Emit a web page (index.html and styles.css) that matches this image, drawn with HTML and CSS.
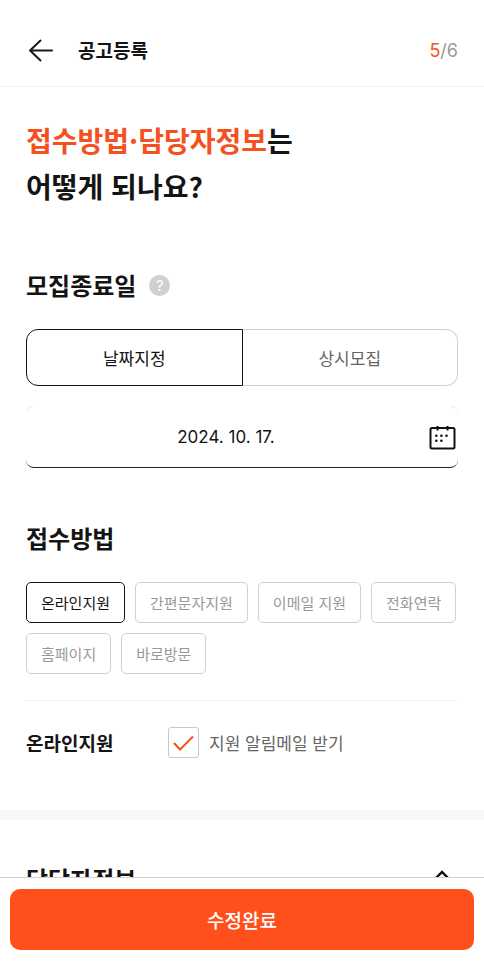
FILE: index.html
```html
<!DOCTYPE html>
<html lang="ko">
<head>
  <meta charset="UTF-8">
  <meta name="viewport" content="width=device-width, initial-scale=1.0">
  <title>공고등록</title>
  <link rel="stylesheet" href="styles.css">
</head>
<body>
  <div class="app">
    <header class="header">
      <button type="button" class="back-btn" aria-label="뒤로">
        <svg width="26" height="24" viewBox="0 0 26 24" fill="none" stroke="#1a1a1a" stroke-width="2" stroke-linecap="round" stroke-linejoin="round">
          <path d="M24 12.5H2M12.5 2.5L2 12.5L12.5 22.5"/>
        </svg>
      </button>
      <div class="header-title">공고등록</div>
      <div class="step"><span class="accent">5</span>/6</div>
    </header>

    <main class="content">
      <section class="section">
        <h1><span class="accent">접수방법·담당자정보</span>는<br>어떻게 되나요?</h1>

        <div class="title-row">
          <h2>모집종료일</h2>
          <button type="button" class="help-btn" aria-label="도움말">?</button>
        </div>
        <div class="tabs">
          <button type="button" class="tab active">날짜지정</button>
          <button type="button" class="tab">상시모집</button>
        </div>
        <div class="date-box">
          <input type="text" class="date-input" value="2024. 10. 17." aria-label="모집종료일">
          <button type="button" class="calendar-btn" aria-label="달력">
            <svg width="28" height="26" viewBox="0 0 28 26" fill="none" stroke="#111" stroke-width="2">
              <rect x="2.5" y="4" width="24" height="20.5" rx="1.5"/>
              <path d="M9.5 2V6.5M19.5 2V6.5"/>
              <g fill="#111" stroke="none">
                <circle cx="8.3" cy="11.7" r="1.3"/>
                <circle cx="13.4" cy="11.7" r="1.3"/>
                <circle cx="18.5" cy="11.7" r="1.3"/>
                <circle cx="8.3" cy="16.8" r="1.3"/>
                <circle cx="13.4" cy="16.8" r="1.3"/>
              </g>
            </svg>
          </button>
        </div>

        <div class="title-row method-title">
          <h2>접수방법</h2>
        </div>
        <div class="chips">
          <button type="button" class="chip active">온라인지원</button>
          <button type="button" class="chip">간편문자지원</button>
          <button type="button" class="chip">이메일 지원</button>
          <button type="button" class="chip">전화연락</button>
          <button type="button" class="chip">홈페이지</button>
          <button type="button" class="chip">바로방문</button>
        </div>

        <div class="option-row">
          <h3>온라인지원</h3>
          <input type="checkbox" class="check" id="mailAlarm" checked>
          <label for="mailAlarm">지원 알림메일 받기</label>
        </div>
      </section>

      <section class="section manager">
        <h2>담당자정보</h2>
        <button type="button" class="fold-btn" aria-label="접기">
          <svg width="20" height="20" viewBox="0 0 20 20" fill="none" stroke="#111" stroke-width="2.4">
            <path d="M1 12L10 3L19 12"/>
          </svg>
        </button>
      </section>
    </main>

    <footer class="footer">
      <button type="submit" class="submit-btn">수정완료</button>
    </footer>
  </div>
</body>
</html>
```
FILE: styles.css
```css
:root {
  --primary: #ff501b;
  --accent: #f4511e;
  --text: #141414;
  --gray: #666;
  --light: #999;
  --border: #d0d0d0;
  --line: #f0f0f0;
}

* {
  margin: 0;
  padding: 0;
  box-sizing: border-box;
}

body {
  background: #fff;
  color: var(--text);
  font-family: 'Noto Sans CJK KR', sans-serif;
}

button, input {
  font-family: inherit;
  color: inherit;
  background: none;
  border: none;
}

button {
  cursor: pointer;
}

svg {
  display: block;
}

h1 {
  font-size: 28px;
  line-height: 46px;
  font-weight: 700;
}

h2 {
  font-size: 24px;
  line-height: 36px;
  font-weight: 700;
}

h3 {
  font-size: 19px;
  font-weight: 700;
}

.accent {
  color: var(--accent);
}

.app {
  height: 100vh;
  display: flex;
  flex-direction: column;
}

.header {
  display: flex;
  align-items: center;
  padding: 30px 26px 16px 28px;
  border-bottom: 1px solid var(--line);
}

.back-btn {
  margin-right: 24px;
}

.header-title {
  flex: 1;
  font-size: 19px;
  line-height: 40px;
  font-weight: 700;
}

.step {
  font-family: Inter, sans-serif;
  font-size: 18px;
  color: var(--light);
}

.content {
  flex: 1;
  min-height: 0;
  overflow-y: auto;
  scrollbar-width: none;
}

.section {
  padding: 30px 26px 52px;
}

.title-row {
  display: flex;
  align-items: center;
  gap: 13px;
  margin-top: 58px;
}

.method-title {
  margin-top: 52px;
}

.help-btn {
  width: 21px;
  height: 21px;
  border-radius: 50%;
  background: #d0d0d0;
  color: #fff;
  font-family: Inter, sans-serif;
  font-size: 15px;
  line-height: 21px;
}

.tabs {
  display: flex;
  margin-top: 26px;
}

.tab {
  flex: 1;
  height: 57px;
  border: 1px solid var(--border);
  border-left: none;
  border-radius: 0 12px 12px 0;
  font-size: 17px;
  color: var(--gray);
}

.tab.active {
  border: 1px solid var(--text);
  border-radius: 12px 0 0 12px;
  color: var(--text);
}

.date-box {
  position: relative;
  display: flex;
  align-items: center;
  height: 62px;
  margin-top: 20px;
  border-bottom: 1px solid #222;
  border-radius: 8px;
}

/* faint rounded corners on the upper edge */
.date-box::before,
.date-box::after {
  content: '';
  position: absolute;
  top: 0;
  width: 7px;
  height: 7px;
  border-top: 1px solid #e4e4e4;
}

.date-box::before {
  left: 0;
  border-top-left-radius: 7px;
}

.date-box::after {
  right: 0;
  border-top-right-radius: 7px;
}

.date-input {
  flex: 1;
  min-width: 0;
  height: 100%;
  font-family: Inter, sans-serif;
  font-size: 17px;
  text-align: center;
}

.calendar-btn {
  padding: 0 2px;
}

.chips {
  display: flex;
  flex-wrap: wrap;
  gap: 10px;
  margin-top: 26px;
}

.chip {
  height: 41px;
  padding: 0 14px;
  border: 1px solid var(--border);
  border-radius: 5px;
  font-size: 15px;
  color: var(--light);
}

.chip.active {
  border-color: var(--text);
  color: var(--text);
}

.option-row {
  display: flex;
  align-items: center;
  margin-top: 26px;
  padding-top: 26px;
  border-top: 1px solid var(--line);
}

.option-row h3 {
  width: 142px;
  line-height: 30px;
}

.option-row label {
  margin-left: 10px;
  font-size: 17px;
  line-height: 30px;
  color: var(--gray);
}

.check {
  appearance: none;
  width: 31px;
  height: 31px;
  border: 1px solid #c8c8c8;
  border-radius: 3px;
}

.check:checked {
  background: url("data:image/svg+xml,%3Csvg xmlns='http://www.w3.org/2000/svg' viewBox='0 0 29 29'%3E%3Cpath d='M5 15L11 21.5L24 8.5' fill='none' stroke='%23f4511e' stroke-width='2'/%3E%3C/svg%3E") center / 100% no-repeat;
}

.manager {
  display: flex;
  align-items: center;
  justify-content: space-between;
  padding: 41px 32px 52px 26px;
  border-top: 10px solid #f7f7f7;
}

.footer {
  padding: 11px 10px;
  border-top: 1px solid var(--border);
  background: #fff;
}

.submit-btn {
  width: 100%;
  height: 61px;
  border-radius: 10px;
  background: var(--primary);
  color: #fff;
  font-size: 19px;
  font-weight: 500;
}
```
